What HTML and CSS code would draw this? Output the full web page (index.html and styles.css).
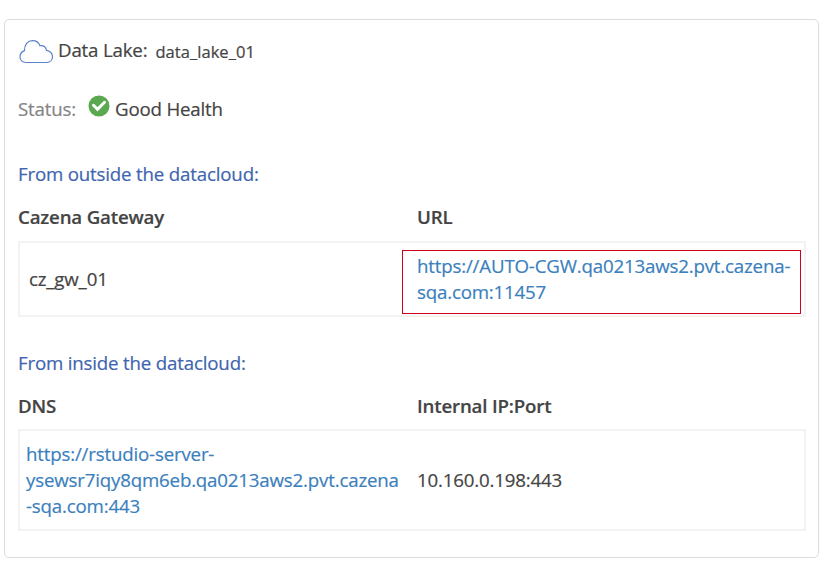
FILE: index.html
```html
<!DOCTYPE html>
<html lang="en"><head><meta charset="utf-8"><title>Data Lake</title><link rel="stylesheet" href="styles.css"></head>
<body>
<main class="card">
  <header class="lake">
    <svg class="cloud" width="36" height="26" viewBox="0 0 36 26"><path d="M8 23.500C4.300 23.500 2 21 2 17.800c0-3 1.800-5.200 4.500-6.200C6.200 5.500 9.800 1.700 14.500 1.700c3.700 0 6.300 2 7.500 5 3.500-.7 6 1.300 6.500 4.600 3.500.7 6 3 6 6.400 0 3.300-2.500 5.800-6 5.800z"/></svg>
    <span class="lake-label">Data Lake:</span><span class="lake-name">data_lake_01</span>
  </header>
  <div class="status">
    <span class="status-label">Status:</span>
    <svg class="check" width="22" height="22" viewBox="0 0 22 22"><circle cx="11" cy="11" r="10.500"/><path d="M5.500 10.300l4 4 7-7"/></svg>
    <span class="health">Good Health</span>
  </div>
  <section class="outside">
    <h2>From outside the datacloud:</h2>
    <div class="row heads"><span>Cazena Gateway</span><span>URL</span></div>
    <div class="row box gateway"><span class="gateway-name">cz_gw_01</span><a class="highlight">https://AUTO-CGW.qa0213aws2.pvt.cazena-<br>sqa.com:11457</a></div>
  </section>
  <section class="inside">
    <h2>From inside the datacloud:</h2>
    <div class="row heads"><span>DNS</span><span>Internal IP:Port</span></div>
    <div class="row box dns"><a>https://rstudio-server-<br>ysewsr7iqy8qm6eb.qa0213aws2.pvt.cazena<br>-sqa.com:443</a><span class="ip">10.160.0.198:443</span></div>
  </section>
</main>
</body></html>
```
FILE: styles.css
```css
* { box-sizing: border-box; }
body { margin: 0; background: #fff; color: #444; font: 18.7px/26px "Open Sans", sans-serif; letter-spacing: -0.18px; -webkit-text-stroke: 0.2px; overflow: hidden; white-space: nowrap; }
.card { width: 815px; height: 539px; margin: 19px 0 0 4px; padding: 17px 13px 0; border: 1px solid #dcdcdc; border-radius: 5px; }
.lake { display: flex; height: 26px; align-items: flex-start; }
.cloud { margin-top: 2px; fill: none; stroke: #5b82c9; stroke-width: 1.2; }
.lake-label { margin-left: 4px; }
.lake-name { margin: 2px 0 0 8px; font-size: 16.5px; letter-spacing: 0.05px; }
.status { display: flex; height: 26px; margin-top: 33px; align-items: center; }
.status-label { color: #858585; }
.check { margin: -6px 5px 0 12px; }
.check circle { fill: #5aa84f; }
.check path { fill: none; stroke: #fff; stroke-width: 3; stroke-linecap: round; }
h2 { margin: 0; font-size: inherit; font-weight: 400; color: #4065b0; height: 26px; }
.outside { margin-top: 39px; }
.inside { margin-top: 33px; }
.row { display: grid; grid-template-columns: 399px 1fr; align-items: center; }
.heads { height: 26px; margin-top: 17px; font-weight: 600; }
.box { width: 788px; border: 2px solid #f3f3f3; }
.gateway { height: 76px; margin-top: 11px; grid-template-columns: 382px 1fr; }
.gateway-name { padding-left: 9px; }
.highlight { position: relative; top: 3px; width: 399px; height: 64px; padding: 2px 14px; border: 1px solid #d0021b; }
.dns { height: 102px; margin-top: 10px; }
.dns a { padding-left: 6px; }
.dns .ip { margin-left: -2px; }
a { color: #3b7fbd; }
```
